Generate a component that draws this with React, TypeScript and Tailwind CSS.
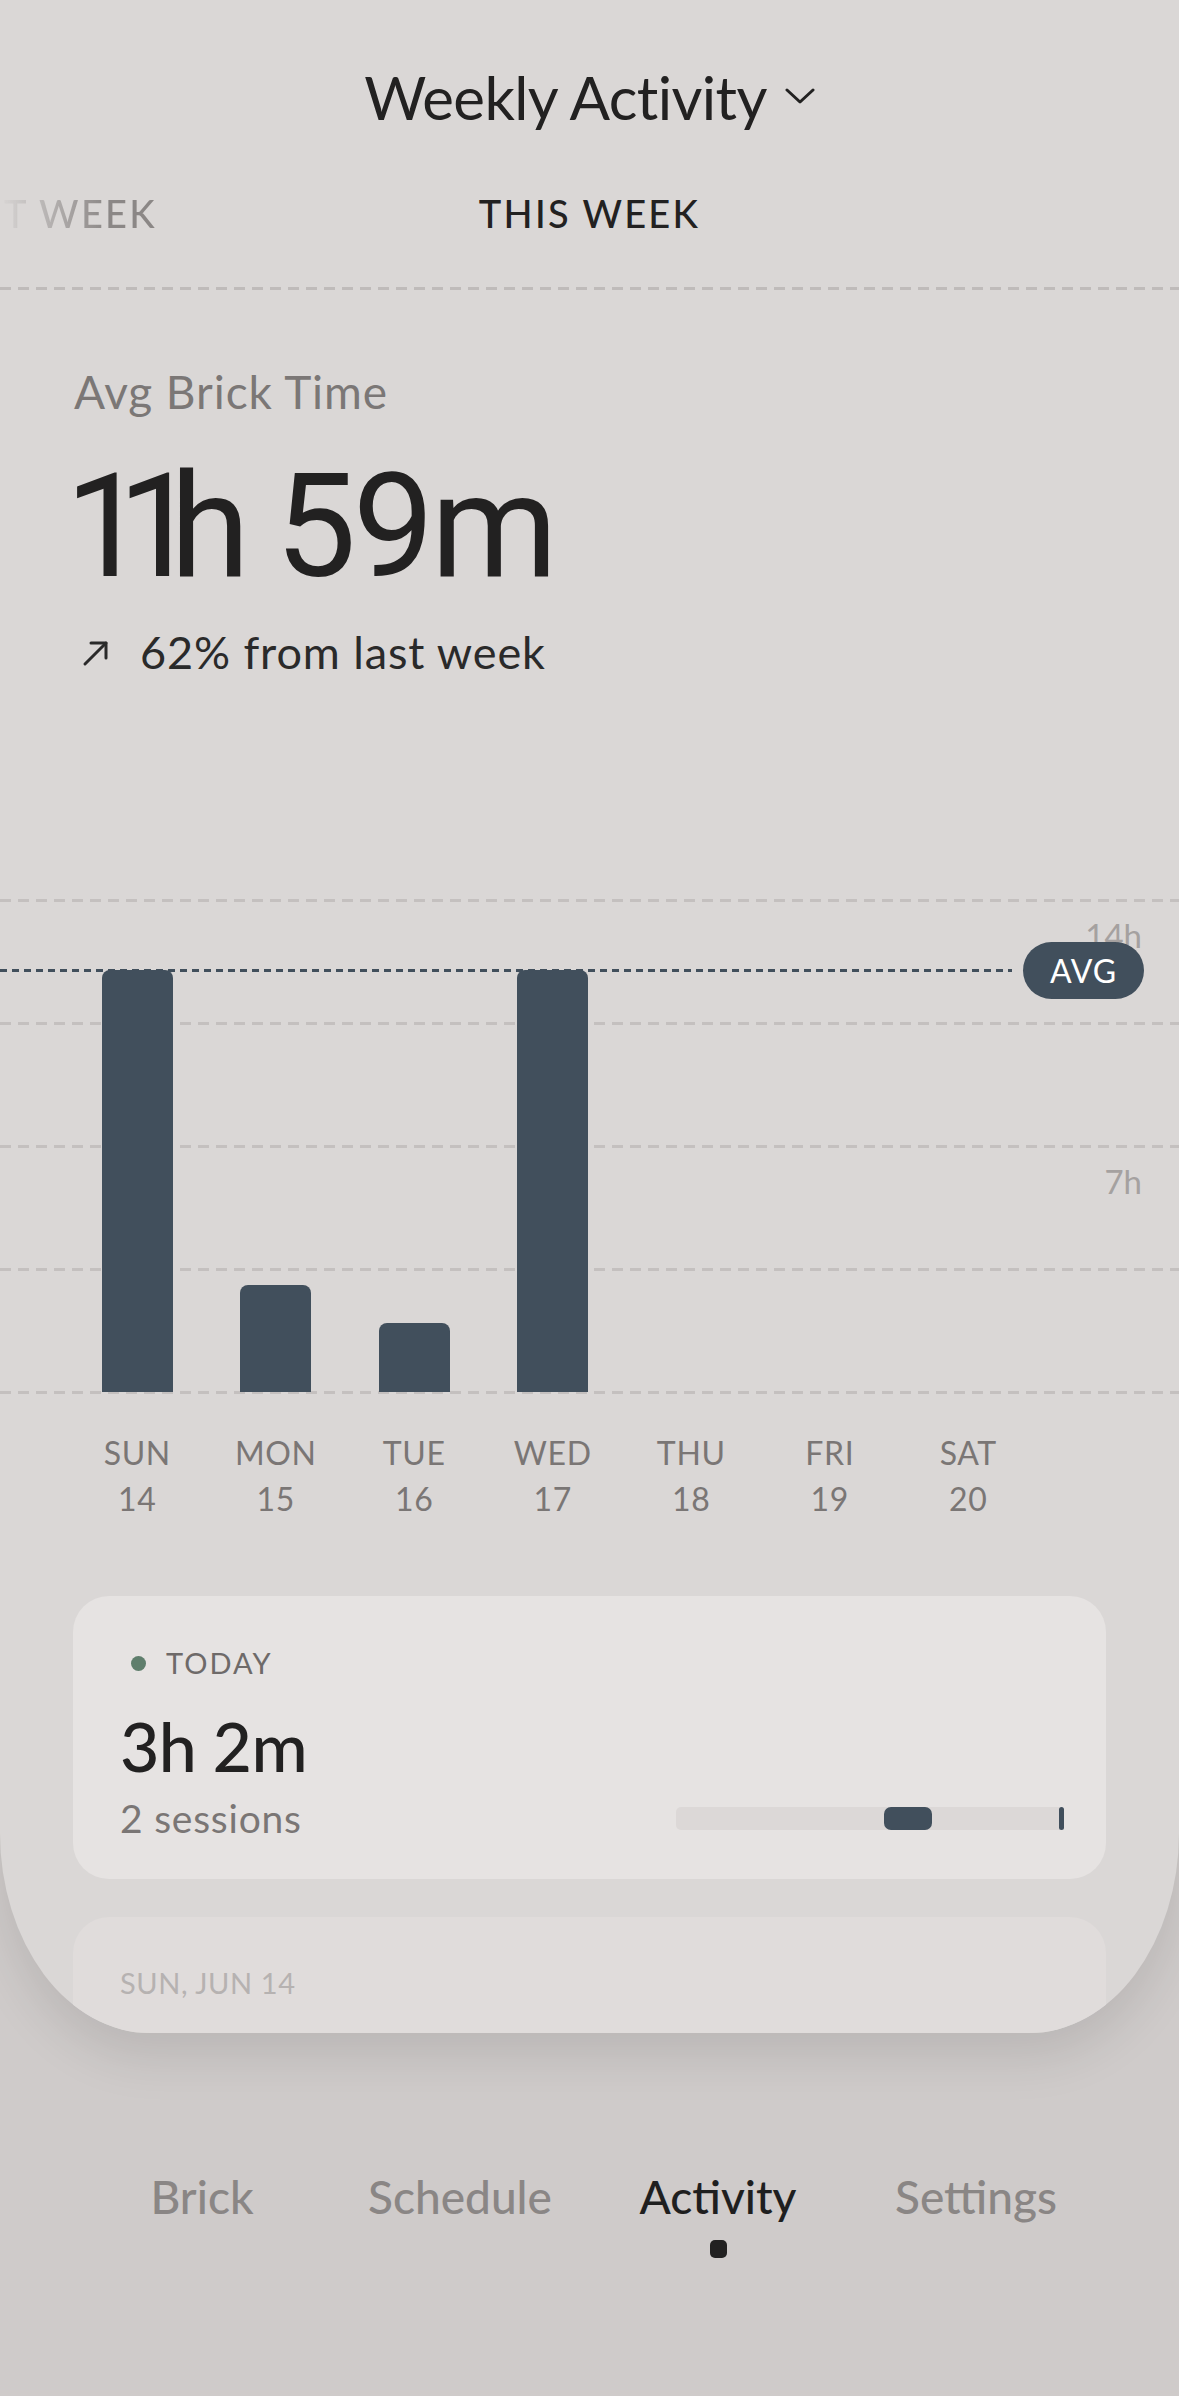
import React from "react";

const bars = [422, 107, 69, 422, 0, 0, 0];
const days = [
  ["SUN", "14"],
  ["MON", "15"],
  ["TUE", "16"],
  ["WED", "17"],
  ["THU", "18"],
  ["FRI", "19"],
  ["SAT", "20"],
];

export default function App() {
  return (
    <div className="relative w-[1179px] h-[2396px] overflow-hidden bg-[#cfcbca] font-['Lato','Noto_Sans',sans-serif]">
      {/* Main panel */}
      <div className="relative h-[2033px] overflow-hidden bg-[#dad7d6] rounded-bl-[150px_200px] rounded-br-[150px_200px] shadow-[0_24px_50px_rgba(0,0,0,0.10)]">
        {/* Title */}
        <div className="pt-[67px] flex justify-center items-center gap-[18px]">
          <span className="text-[60px] leading-[60px] text-[#222121] tracking-[-0.01em]">Weekly Activity</span>
          <svg width="30" height="16" viewBox="0 0 30 16" className="mt-[-2px]">
            <path d="M2 2 L15 14 L28 2" fill="none" stroke="#222121" strokeWidth="3" strokeLinecap="round" strokeLinejoin="round" />
          </svg>
        </div>

        {/* Week tabs */}
        <div className="relative mt-[62px] h-[48px] flex justify-center">
          <span className="absolute right-[1022px] top-0 text-[38px] leading-[48px] font-medium tracking-[0.06em] whitespace-nowrap text-transparent bg-clip-text bg-linear-to-r from-transparent from-[30%] to-[#8b8786] to-[78%]">
            LAST WEEK
          </span>
          <span className="text-[38px] leading-[48px] font-medium tracking-[0.06em] text-[#222121]">THIS WEEK</span>
        </div>

        {/* Divider */}
        <div className="mt-[50px] h-[3px] bg-[repeating-linear-gradient(to_right,#bfbbba_0px,#bfbbba_11px,transparent_11px,transparent_18px)]" />

        {/* Summary */}
        <div className="px-[74px]">
          <div className="mt-[76px] text-[46px] leading-[52px] tracking-[0.02em] text-[#7b7776]">Avg Brick Time</div>
          <div className="mt-[37px] ml-[-9px] flex items-baseline font-['Roboto','Lato',sans-serif] text-[145px] leading-[142px] font-normal text-[#222121] whitespace-nowrap">
            <span>
              <span className="tracking-[-0.2em]">11</span>
              <span className="tracking-[-0.02em]">h</span>
            </span>
            <span className="ml-[28px] tracking-[-0.025em]">59m</span>
          </div>
          <div className="mt-[29px] flex items-center h-[52px]">
            <svg width="28" height="28" viewBox="0 0 28 28" className="ml-[8px] mt-[2px]">
              <path d="M3 25 L24 4" fill="none" stroke="#2a2a2a" strokeWidth="3" strokeLinecap="round" />
              <path d="M9 4 H24 V19" fill="none" stroke="#2a2a2a" strokeWidth="3" strokeLinecap="round" strokeLinejoin="round" />
            </svg>
            <span className="ml-[30px] text-[45px] leading-[52px] tracking-[0.02em] text-[#2a2a2a]">62% from last week</span>
          </div>
        </div>

        {/* Chart */}
        <div className="relative mt-[222px] h-[492px]">
          <div className="absolute left-0 right-0 top-[-1px] bottom-[-2px] flex flex-col justify-between">
            <div className="h-[3px] bg-[repeating-linear-gradient(to_right,#c4c0bf_0px,#c4c0bf_11px,transparent_11px,transparent_18px)]" />
            <div className="h-[3px] bg-[repeating-linear-gradient(to_right,#c4c0bf_0px,#c4c0bf_11px,transparent_11px,transparent_18px)]" />
            <div className="h-[3px] bg-[repeating-linear-gradient(to_right,#c4c0bf_0px,#c4c0bf_11px,transparent_11px,transparent_18px)]" />
            <div className="h-[3px] bg-[repeating-linear-gradient(to_right,#c4c0bf_0px,#c4c0bf_11px,transparent_11px,transparent_18px)]" />
            <div className="h-[3px] bg-[repeating-linear-gradient(to_right,#c4c0bf_0px,#c4c0bf_11px,transparent_11px,transparent_18px)]" />
          </div>

          <span className="absolute right-[37px] top-[15px] text-[33px] leading-[40px] text-[#a5a1a0]">14h</span>
          <span className="absolute right-[37px] top-[261px] text-[33px] leading-[40px] text-[#a5a1a0]">7h</span>

          <div className="absolute inset-0 flex items-end pl-[68px]">
            {bars.map((h, i) => (
              <div key={i} className="w-[138.5px] flex justify-center items-end h-full">
                {h > 0 && <div className="w-[71px] rounded-t-[8px] bg-[#414f5c]" style={{ height: h }} />}
              </div>
            ))}
          </div>

          <div className="absolute left-0 top-[69px] w-[1012px] h-[3px] bg-[repeating-linear-gradient(to_right,#414f5c_0px,#414f5c_7px,transparent_7px,transparent_12px)]" />
          <div className="absolute left-[1023px] top-[42px] w-[121px] h-[57px] rounded-full bg-[#414f5c] flex items-center justify-center text-[32px] leading-none tracking-[0.03em] text-white">
            AVG
          </div>
        </div>

        {/* Day labels */}
        <div className="mt-[38px] flex pl-[68px]">
          {days.map(([d, n]) => (
            <div key={d} className="w-[138.5px] flex flex-col items-center text-[32px] leading-[46px] text-[#7a7675] tracking-[0.02em]">
              <span>{d}</span>
              <span>{n}</span>
            </div>
          ))}
        </div>

        {/* Cards */}
        <div className="px-[73px]">
          <div className="mt-[74px] rounded-[36px] bg-[#e6e3e2] pl-[47px] pr-[42px] pt-[50px] pb-[39px]">
            <div className="flex items-center h-[34px]">
              <span className="w-[15px] h-[15px] rounded-full bg-[#5f7e6c] ml-[11px]" />
              <span className="ml-[20px] text-[29px] leading-[34px] tracking-[0.07em] text-[#6e6a69]">TODAY</span>
            </div>
            <div className="mt-[30px] text-[68px] leading-[72px] font-medium tracking-[-0.01em] text-[#222121]">3h 2m</div>
            <div className="mt-[14px] flex items-center justify-between h-[44px]">
              <span className="text-[39px] leading-[44px] tracking-[0.02em] text-[#7a7675]">2 sessions</span>
              <div className="relative w-[388px] h-[23px] rounded-[5px] bg-[#dcd8d7]">
                <div className="absolute left-[208px] top-0 w-[48px] h-[23px] rounded-[7px] bg-[#414f5c]" />
                <div className="absolute right-0 top-0 w-[5px] h-[23px] rounded-full bg-[#414f5c]" />
              </div>
            </div>
          </div>

          <div className="mt-[38px] h-[200px] rounded-[36px] bg-[#e0dcdb] pl-[47px] pt-[48px]">
            <span className="text-[29px] leading-[36px] tracking-[0.02em] text-[#b6b2b1]">SUN, JUN 14</span>
          </div>
        </div>
      </div>

      {/* Bottom navigation */}
      <nav className="mt-[138px] px-[73px] flex">
        {[
          ["Brick", false],
          ["Schedule", false],
          ["Activity", true],
          ["Settings", false],
        ].map(([label, active]) => (
          <div key={label as string} className="w-[258px] flex flex-col items-center">
            <span
              className={
                active
                  ? "text-[46px] leading-[52px] font-medium text-[#1f1f1f]"
                  : "text-[46px] leading-[52px] font-medium text-[#8a8685]"
              }
            >
              {label as string}
            </span>
            {active && <span className="mt-[17px] w-[17px] h-[18px] rounded-[5px] bg-[#222121]" />}
          </div>
        ))}
      </nav>
    </div>
  );
}
